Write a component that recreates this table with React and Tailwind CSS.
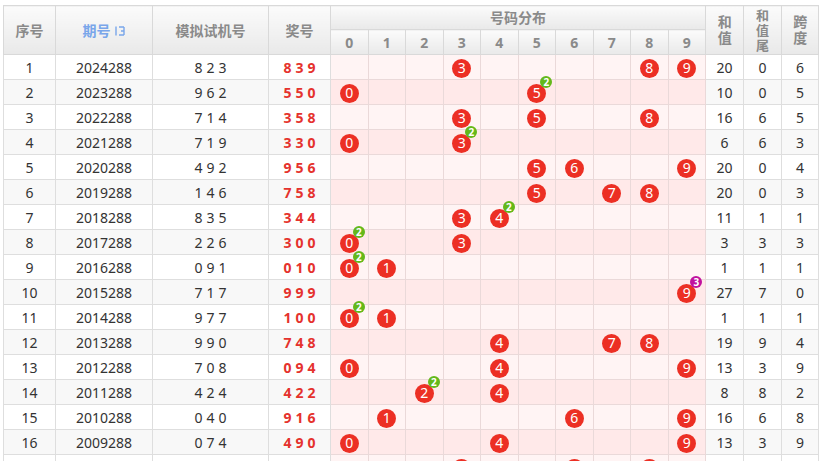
import React from 'react';

const rows = [
  { no: 1, issue: '2024288', test: '823', prize: '839', balls: [[3], [8], [9]], sum: 20, tail: 0, span: 6 },
  { no: 2, issue: '2023288', test: '962', prize: '550', balls: [[0], [5, 2]], sum: 10, tail: 0, span: 5 },
  { no: 3, issue: '2022288', test: '714', prize: '358', balls: [[3], [5], [8]], sum: 16, tail: 6, span: 5 },
  { no: 4, issue: '2021288', test: '719', prize: '330', balls: [[0], [3, 2]], sum: 6, tail: 6, span: 3 },
  { no: 5, issue: '2020288', test: '492', prize: '956', balls: [[5], [6], [9]], sum: 20, tail: 0, span: 4 },
  { no: 6, issue: '2019288', test: '146', prize: '758', balls: [[5], [7], [8]], sum: 20, tail: 0, span: 3 },
  { no: 7, issue: '2018288', test: '835', prize: '344', balls: [[3], [4, 2]], sum: 11, tail: 1, span: 1 },
  { no: 8, issue: '2017288', test: '226', prize: '300', balls: [[0, 2], [3]], sum: 3, tail: 3, span: 3 },
  { no: 9, issue: '2016288', test: '091', prize: '010', balls: [[0, 2], [1]], sum: 1, tail: 1, span: 1 },
  { no: 10, issue: '2015288', test: '717', prize: '999', balls: [[9, 3]], sum: 27, tail: 7, span: 0 },
  { no: 11, issue: '2014288', test: '977', prize: '100', balls: [[0, 2], [1]], sum: 1, tail: 1, span: 1 },
  { no: 12, issue: '2013288', test: '990', prize: '748', balls: [[4], [7], [8]], sum: 19, tail: 9, span: 4 },
  { no: 13, issue: '2012288', test: '708', prize: '094', balls: [[0], [4], [9]], sum: 13, tail: 3, span: 9 },
  { no: 14, issue: '2011288', test: '424', prize: '422', balls: [[2, 2], [4]], sum: 8, tail: 8, span: 2 },
  { no: 15, issue: '2010288', test: '040', prize: '916', balls: [[1], [6], [9]], sum: 16, tail: 6, span: 8 },
  { no: 16, issue: '2009288', test: '074', prize: '490', balls: [[0], [4], [9]], sum: 13, tail: 3, span: 9 },
  { no: 17, issue: '2008288', test: '385', prize: '863', balls: [[3], [6], [8]], sum: 17, tail: 7, span: 5 },
];

const digits = [0, 1, 2, 3, 4, 5, 6, 7, 8, 9];

const Ball = ({ n, badge }) => (
  <span className="relative inline-flex w-[19px] h-[19px] rounded-full bg-[#ec2f24] text-white text-[14px] leading-none items-center justify-center align-middle">
    {n}
    {badge && (
      <span
        className={`absolute left-[13px] top-[-8px] w-[12px] h-[12px] rounded-full text-white text-[10px] font-bold leading-none flex items-center justify-center ${badge === 3 ? 'bg-[#c1129e]' : 'bg-[#64b81b]'}`}
      >
        {badge}
      </span>
    )}
  </span>
);

const SortIcon = () => (
  <svg width="12" height="12" viewBox="0 0 12 12" className="inline-block ml-[3px] align-[-1px]" fill="none" stroke="#79a6ea" strokeWidth="1.4">
    <path d="M2 1.5v9" />
    <path d="M5 2h5M7 6h3M5 10h5M10 2v8" />
  </svg>
);

export default function App() {
  const th = 'border border-[#d9d9d9] text-[#8a8a8a] font-bold text-[14px] p-0 bg-gradient-to-b from-[#fbfbfb] to-[#e9e9e9]';
  return (
    <div className="w-[821px] h-[461px] overflow-hidden bg-white pt-[5px] pl-[3px]" style={{ fontFamily: '"Noto Sans", "Noto Sans CJK SC", sans-serif' }}>
      <table className="table-fixed border-collapse w-[816px] text-center text-[14px] text-[#333]">
        <colgroup>
          <col className="w-[52px]" />
          <col className="w-[97px]" />
          <col className="w-[116px]" />
          <col className="w-[62px]" />
          {digits.map((d) => (
            <col key={d} className="w-[37.5px]" />
          ))}
          <col className="w-[38px]" />
          <col className="w-[38px]" />
          <col className="w-[37px]" />
        </colgroup>
        <thead>
          <tr className="h-[24px]">
            <th rowSpan={2} className={th}>序号</th>
            <th rowSpan={2} className={`${th} !text-[#79a6ea]`}>
              期号<SortIcon />
            </th>
            <th rowSpan={2} className={th}>模拟试机号</th>
            <th rowSpan={2} className={th}>奖号</th>
            <th colSpan={10} className={th}>号码分布</th>
            <th rowSpan={2} className={th}>
              <div className="flex flex-col items-center leading-[16px]">
                <span>和</span>
                <span>值</span>
              </div>
            </th>
            <th rowSpan={2} className={th}>
              <div className="flex flex-col items-center leading-[15px] text-[13px]">
                <span>和</span>
                <span>值</span>
                <span>尾</span>
              </div>
            </th>
            <th rowSpan={2} className={th}>
              <div className="flex flex-col items-center leading-[16px]">
                <span>跨</span>
                <span>度</span>
              </div>
            </th>
          </tr>
          <tr className="h-[25px]">
            {digits.map((d) => (
              <th key={d} className={th}>{d}</th>
            ))}
          </tr>
        </thead>
        <tbody>
          {rows.map((r, i) => {
            const even = i % 2 === 1;
            const base = `border border-[#dedede] p-0 ${even ? 'bg-[#f8f8f8]' : 'bg-white'}`;
            const dist = `border border-[#ead9d9] p-0 ${even ? 'bg-[#ffe9e9]' : 'bg-[#fff4f4]'}`;
            const ballMap = {};
            r.balls.forEach(([n, b]) => (ballMap[n] = b || true));
            return (
              <tr key={r.no} className="h-[25px]">
                <td className={base}>{r.no}</td>
                <td className={base}>{r.issue}</td>
                <td className={`${base} tracking-[4px] pl-[4px]`}>{r.test}</td>
                <td className={`${base} text-[#e5322d] font-bold tracking-[4px] pl-[4px]`}>{r.prize}</td>
                {digits.map((d) => (
                  <td key={d} className={dist}>
                    {ballMap[d] !== undefined && (
                      <Ball n={d} badge={ballMap[d] === true ? null : ballMap[d]} />
                    )}
                  </td>
                ))}
                <td className={base}>{r.sum}</td>
                <td className={base}>{r.tail}</td>
                <td className={base}>{r.span}</td>
              </tr>
            );
          })}
        </tbody>
      </table>
    </div>
  );
}
